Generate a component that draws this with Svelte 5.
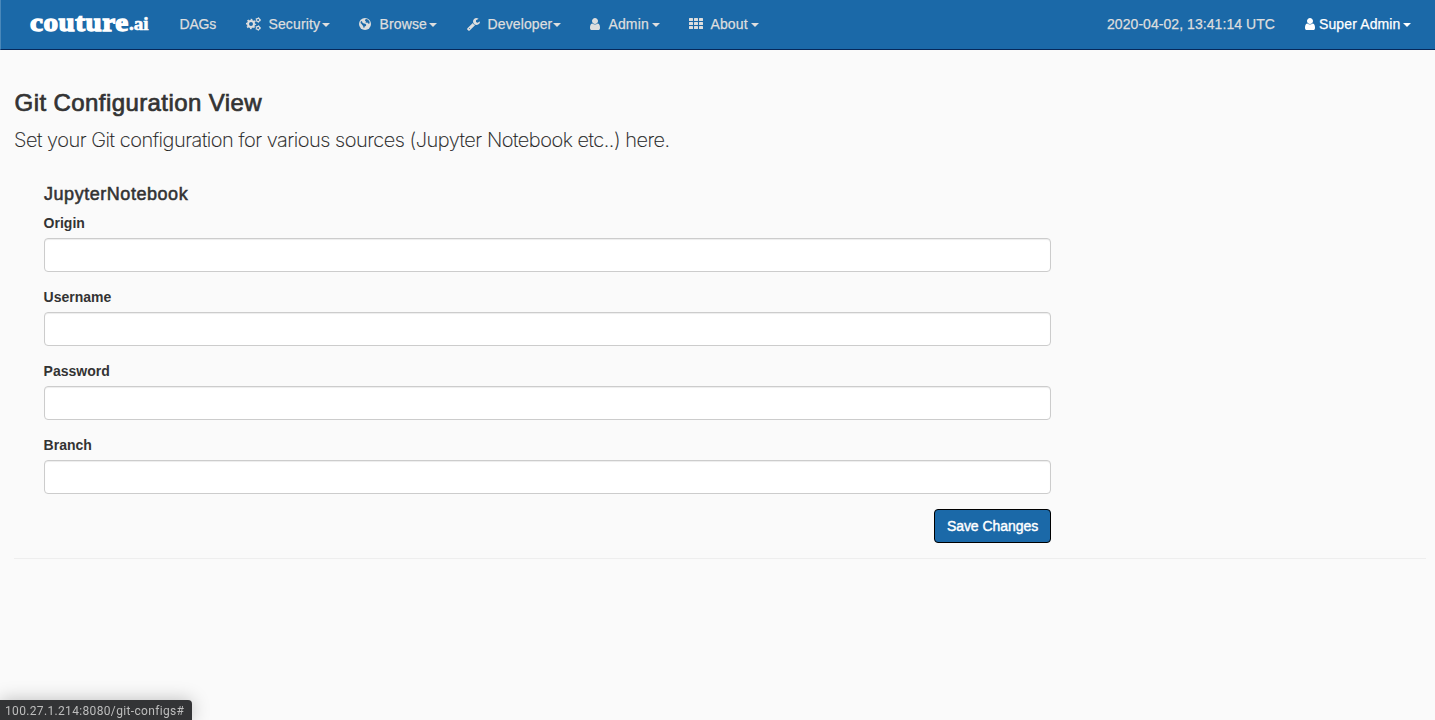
<script>
  const items = [
    { label: 'Security', icon: 'cogs', width: 113, iconWidth: 22, textWidth: 52 },
    { label: 'Browse', icon: 'globe', width: 108, iconWidth: 20, textWidth: 48 },
    { label: 'Developer', icon: 'wrench', width: 123, iconWidth: 20, textWidth: 64 },
    { label: 'Admin', icon: 'user', width: 99, iconWidth: 18, textWidth: 42 },
    { label: 'About', icon: 'grid', width: 100, iconWidth: 21, textWidth: 39 }
  ];
  const fields = ['Origin', 'Username', 'Password', 'Branch'];
</script>

{#snippet icon(name)}
  {#if name === 'cogs'}
    <svg width="15" height="14" viewBox="0 0 15 14" fill="none" stroke="currentColor">
      <circle cx="5" cy="7" r="3" stroke-width="2" />
      <circle cx="5" cy="7" r="4.5" stroke-width="1.3" stroke-dasharray="1.75 1.784" stroke-dashoffset=".9" />
      <circle cx="12.1" cy="3" r="1.6" stroke-width="1.1" />
      <circle cx="12.1" cy="3" r="2.4" stroke-width=".8" stroke-dasharray="1.2 1.313" />
      <circle cx="12.1" cy="11" r="1.6" stroke-width="1.1" />
      <circle cx="12.1" cy="11" r="2.4" stroke-width=".8" stroke-dasharray="1.2 1.313" />
    </svg>
  {:else if name === 'globe'}
    <svg width="12" height="14" viewBox="0 0 12 14">
      <circle cx="6" cy="7" r="6" fill="currentColor" />
      <path class="land" d="m6.4 2.2 1.5-.2 1.7 1.2 1.1 1.9-.4 1.6-1.3-.3-.5-1-1.2.4-.9-.6.6-.9-1.1-.6z" />
      <path class="land" d="m2 4 1.1.4.4 1.3 1.3.8 1.5.3 1 1-.5 1.1-1.2.7-.4 1.5-.8-.5-.2-1.5-1-1L2.6 7 1.5 5.9z" />
    </svg>
  {:else if name === 'wrench'}
    <svg width="13" height="14" viewBox="64 0 1664 1792" fill="currentColor">
      <path d="M448 1472q0-26-19-45t-45-19-45 19-19 45 19 45 45 19 45-19 19-45zm644-420l-682 682q-37 37-90 37-52 0-91-37l-106-108q-38-36-38-90 0-53 38-91l681-681q39 98 114.5 173.5t173.5 114.5zm634-435q0 39-23 106-47 134-164.5 217.5t-258.5 83.5q-185 0-316.5-131.5t-131.5-316.5 131.5-316.5 316.5-131.5q58 0 121.5 16.5t107.5 46.5q16 11 16 28t-16 28l-293 169v224l193 107q5-3 79-48.5t135.5-81 70.5-35.5q15 0 23.5 10t8.5 25z" />
    </svg>
  {:else if name === 'user'}
    <svg width="10" height="14" viewBox="0 0 1280 1792" fill="currentColor">
      <path d="M1280 1399q0 109-62.5 187t-150.5 78h-854q-88 0-150.5-78t-62.5-187q0-85 8.5-160.5t31.5-152 58.5-131 94-89 134.5-34.5q131 128 313 128t313-128q76 0 134.5 34.5t94 89 58.5 131 31.5 152 8.5 160.5zm-256-887q0 159-112.5 271.5t-271.5 112.5-271.5-112.5-112.5-271.5 112.5-271.5 271.5-112.5 271.5 112.5 112.5 271.5z" />
    </svg>
  {:else}
    <svg width="14" height="14" viewBox="0 0 14 14" fill="currentColor">
      {#each [1, 5, 9] as y}
        {#each [0, 5, 10] as x}
          <rect {x} {y} width="4" height="3" rx=".5" />
        {/each}
      {/each}
    </svg>
  {/if}
{/snippet}

<nav>
  <a class="brand" href="#home"><span class="name">couture</span><span class="tld">.ai</span></a>
  <a class="dags" href="#dags">DAGs</a>
  {#each items as item}
    <a class="item" href="#{item.icon}" style:width="{item.width}px">
      <span class="ico" style:width="{item.iconWidth}px">{@render icon(item.icon)}</span>
      <span class="label" style:width="{item.textWidth}px">{item.label}</span>
      <i class="caret"></i>
    </a>
  {/each}
  <span class="clock">2020-04-02, 13:41:14 UTC</span>
  <a class="account" href="#account">
    <span class="ico">{@render icon('user')}</span>
    <span class="label">Super Admin</span>
    <i class="caret"></i>
  </a>
</nav>

<main>
  <h2>Git Configuration View</h2>
  <p>Set your Git configuration for various sources (Jupyter Notebook etc..) here.</p>
  <form>
    <h4>JupyterNotebook</h4>
    {#each fields as field}
      <label for={field}>{field}</label>
      <input id={field} type={field === 'Password' ? 'password' : 'text'} />
    {/each}
    <button type="button">Save Changes</button>
  </form>
  <hr />
</main>

<div class="status">100.27.1.214:8080/git-configs#</div>

<style>
  :global(body) {
    background: #fafafa;
    color: #333;
    font: 14px/20px 'Liberation Sans', Arial, sans-serif;
    overflow: hidden;
  }
  nav {
    box-sizing: border-box;
    display: flex;
    height: 50px;
    background: #1b69a8;
    border-bottom: 1px solid #06285a;
    border-left: 1px solid #4a88ba;
    color: #dedede;
    line-height: 48px;
    white-space: nowrap;
    -webkit-text-stroke: 0.25px currentColor;
  }
  nav a {
    color: inherit;
    text-decoration: none;
  }
  .brand {
    display: flex;
    width: 135px;
    padding-left: 28.5px;
    color: #fff;
    font-family: 'Liberation Serif', serif;
    font-weight: bold;
    line-height: 45px;
    -webkit-text-stroke: 1.3px #fff;
  }
  .name {
    width: 99.5px;
    font-size: 26px;
    letter-spacing: 0.5px;
    transform: scaleX(1.12);
    transform-origin: left;
  }
  .tld {
    font-size: 19px;
    line-height: 48px;
    -webkit-text-stroke: 0.6px #fff;
  }
  .dags {
    width: 51px;
    padding-left: 15px;
    letter-spacing: -0.2px;
  }
  .item,
  .account {
    box-sizing: border-box;
    display: flex;
    align-items: center;
    height: 48px;
    padding-left: 15px;
  }
  .ico {
    display: flex;
    flex: none;
  }
  .item .label {
    flex: none;
    padding-left: 1px;
    letter-spacing: 0.12px;
    margin-right: -1px;
  }
  .land {
    fill: #1b69a8;
  }
  .caret {
    margin-left: 2.5px;
    border: 4px solid transparent;
    border-top-color: currentColor;
    border-bottom: 0;
    margin-top: 2px;
  }
  .clock {
    margin-left: auto;
    letter-spacing: 0.06px;
  }
  .account {
    width: 160px;
    padding-left: 30px;
    color: #fff;
  }
  .account .ico {
    width: 14px;
  }
  .account .label {
    letter-spacing: 0.12px;
  }
  main {
    padding: 39px 9px 0 14px;
  }
  h2 {
    margin: 0 0 0 0.6px;
    font-size: 24px;
    font-weight: 400;
    line-height: 27px;
    letter-spacing: 0.41px;
    -webkit-text-stroke: 0.7px #333;
  }
  p {
    margin: 9px 0 0;
    font: 200 20px/30px Inter, sans-serif;
    letter-spacing: -0.47px;
    color: #222;
    white-space: nowrap;
    -webkit-text-stroke: 0.15px #222;
  }
  form {
    display: flex;
    flex-direction: column;
    width: 1007px;
    padding: 29px 0 0 30px;
  }
  h4 {
    margin: 0 0 9px;
    font-size: 18px;
    font-weight: 400;
    line-height: 20px;
    letter-spacing: 0.54px;
    -webkit-text-stroke: 0.55px #333;
  }
  label {
    margin: 0 0 5px -0.4px;
    font-weight: 700;
  }
  input {
    box-sizing: border-box;
    width: 1007px;
    height: 34px;
    margin: 0 0 15px;
    background: #fff;
    border: 1px solid #ccc;
    border-radius: 4px;
    box-shadow: inset 0 1px 1px rgba(0, 0, 0, 0.075);
  }
  button {
    box-sizing: border-box;
    align-self: flex-end;
    width: 117px;
    height: 34px;
    padding: 0;
    background: #1b69a8;
    border: 1px solid #000;
    border-radius: 4px;
    color: #fff;
    font: inherit;
    letter-spacing: -0.05px;
    -webkit-text-stroke: 0.4px #fff;
  }
  hr {
    margin: 15px 0 0;
    border: 0;
    border-top: 1px solid #eee;
  }
  .status {
    position: fixed;
    bottom: 0;
    left: 0;
    box-sizing: border-box;
    width: 192px;
    height: 20px;
    padding-left: 5px;
    background: #333436;
    border-radius: 0 4px 0 0;
    box-shadow: 0 0 18px rgba(0, 0, 0, 0.25);
    color: #bdbdbd;
    font: 12px/22px Roboto, sans-serif;
    letter-spacing: 0.34px;
    white-space: nowrap;
  }
</style>
